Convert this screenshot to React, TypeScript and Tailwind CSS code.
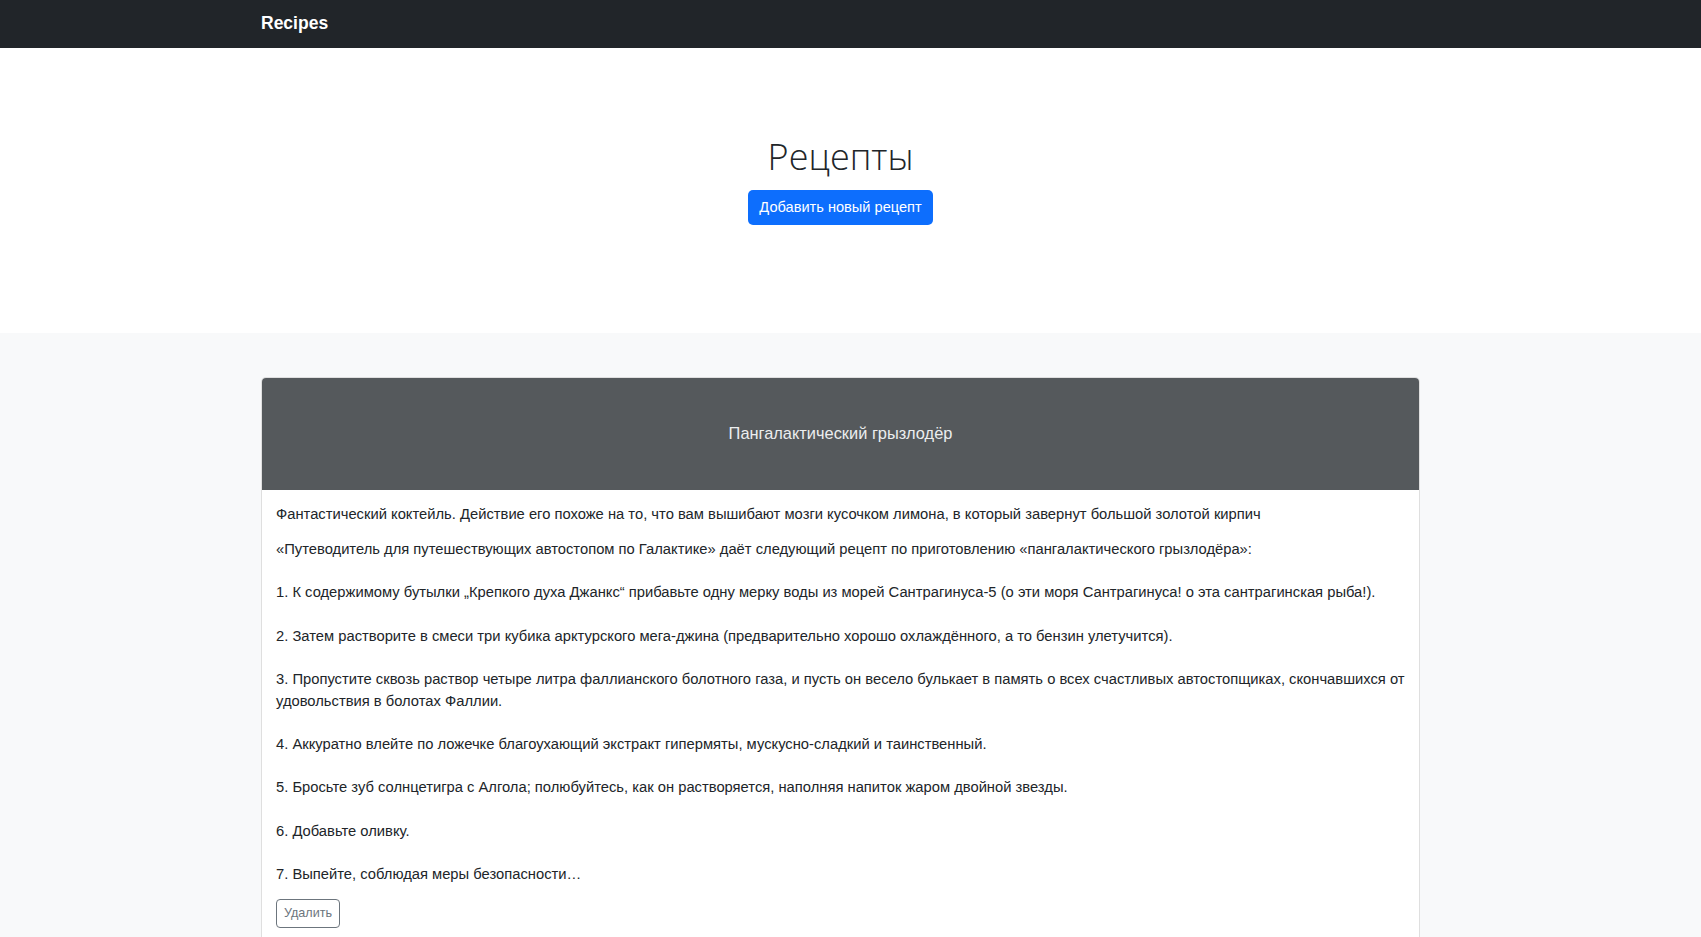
const steps = [
  '«Путеводитель для путешествующих автостопом по Галактике» даёт следующий рецепт по приготовлению «пангалактического грызлодёра»:',
  '',
  '1. К содержимому бутылки „Крепкого духа Джанкс“ прибавьте одну мерку воды из морей Сантрагинуса-5 (о эти моря Сантрагинуса! о эта сантрагинская рыба!).',
  '',
  '2. Затем растворите в смеси три кубика арктурского мега-джина (предварительно хорошо охлаждённого, а то бензин улетучится).',
  '',
  '3. Пропустите сквозь раствор четыре литра фаллианского болотного газа, и пусть он весело булькает в память о всех счастливых автостопщиках, скончавшихся от удовольствия в болотах Фаллии.',
  '',
  '4. Аккуратно влейте по ложечке благоухающий экстракт гипермяты, мускусно-сладкий и таинственный.',
  '',
  '5. Бросьте зуб солнцетигра с Алгола; полюбуйтесь, как он растворяется, наполняя напиток жаром двойной звезды.',
  '',
  '6. Добавьте оливку.',
  '',
  '7. Выпейте, соблюдая меры безопасности…',
].join('\n')

export default function App() {
  return (
    <div className="min-h-screen bg-[#f8f9fa] text-[#212529] font-['Liberation_Sans',sans-serif] text-[14.75px] leading-[21.7px]">
      <header className="bg-[#212529] h-[48px]">
        <div className="mx-auto w-[1179px] pr-[20px] h-full flex items-center">
          <a className="text-white font-bold text-[17.5px]">Recipes</a>
        </div>
      </header>

      <section className="bg-white h-[285px] flex flex-col items-center pt-[87px]">
        <h1 className="font-light text-[36px] leading-[1.2] pr-[20px] font-['Open_Sans',sans-serif]">Рецепты</h1>
        <div className="pr-[20px] mt-[12px]">
          <button className="bg-[#0d6efd] text-white rounded-[5px] px-[11px] h-[35px] text-[14.6px]">
            Добавить новый рецепт
          </button>
        </div>
      </section>

      <main className="pt-[44px]">
        <div className="mx-auto w-[1179px] pr-[20px]">
          <div className="bg-white border border-black/[.125] rounded-[5px] overflow-hidden">
            <div className="bg-[#55595c] h-[112px] flex items-center justify-center text-[#eceeef] text-[16.4px]">
              Пангалактический грызлодёр
            </div>
            <div className="px-[14px] pt-[14px] pb-[14px]">
              <p className="mb-[13px]">
                Фантастический коктейль. Действие его похоже на то, что вам вышибают мозги кусочком лимона, в который завернут большой золотой кирпич
              </p>
              <p className="whitespace-pre-line mb-[13px]">{steps}</p>
              <button className="border border-[#6c757d] text-[#6c757d] rounded-[4px] px-[7px] h-[29px] text-[12.6px]">
                Удалить
              </button>
            </div>
          </div>
        </div>
      </main>
    </div>
  )
}
